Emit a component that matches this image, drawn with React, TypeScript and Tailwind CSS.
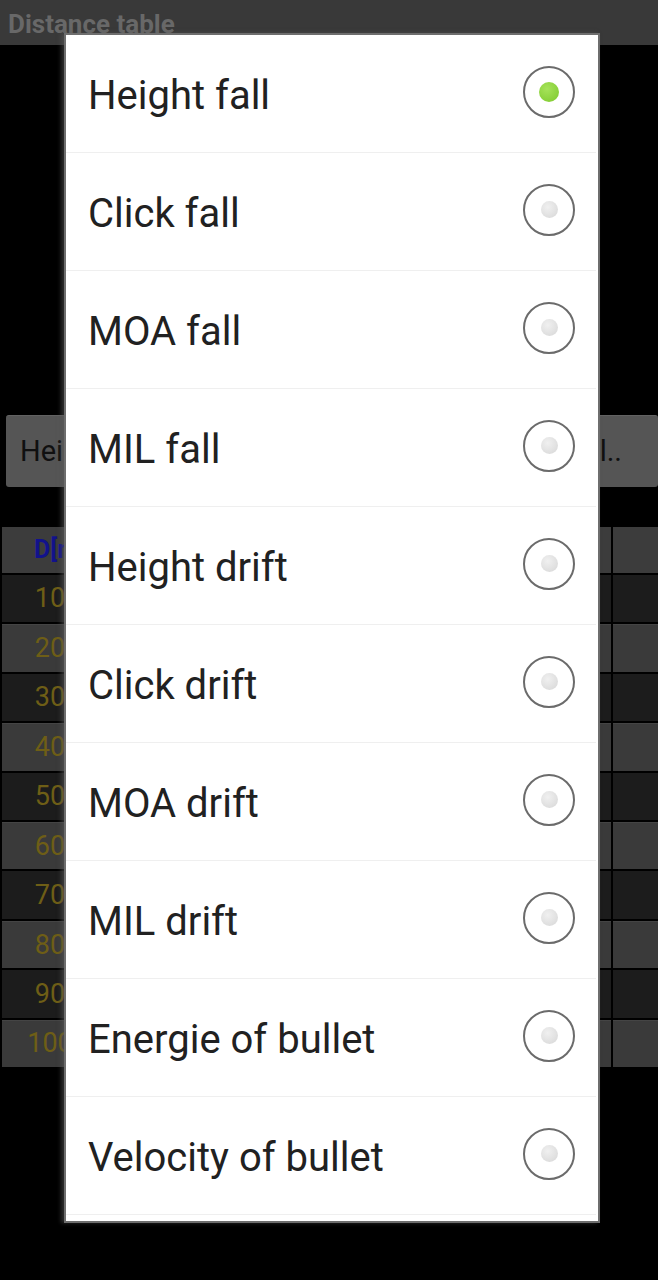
import React from "react";

const options = [
  "Height fall",
  "Click fall",
  "MOA fall",
  "MIL fall",
  "Height drift",
  "Click drift",
  "MOA drift",
  "MIL drift",
  "Energie of bullet",
  "Velocity of bullet",
];

const distances = ["10", "20", "30", "40", "50", "60", "70", "80", "90", "100"];

const Radio = ({ checked }: { checked: boolean }) => (
  <div className="w-[52px] h-[52px] rounded-full border-2 border-[#6b6b6b] flex items-center justify-center">
    {checked ? (
      <div className="w-[20px] h-[20px] rounded-full bg-[radial-gradient(circle_at_40%_35%,#a6e35a,#7cc82c)]" />
    ) : (
      <div className="w-[17px] h-[17px] rounded-full bg-[radial-gradient(circle_at_40%_35%,#f0f0f0,#d6d6d6)]" />
    )}
  </div>
);

export default function App() {
  return (
    <div className="relative w-[658px] h-[1280px] overflow-hidden bg-black font-['Roboto',sans-serif]">
      {/* barre de titre (assombrie) */}
      <div className="h-[45px] bg-[#393939] flex items-center pl-2 pt-[2px]">
        <span className="text-[26px] font-bold text-[#686868] leading-none">Distance table</span>
      </div>

      {/* bouton de sélection */}
      <div className="mt-[370px] ml-[6px] h-[72px] rounded-[3px] bg-[#555555] border-t border-[#626262] flex items-center justify-between pl-[14px] pr-[36px] text-[29px] text-[#101010]">
        <span>Height fall</span>
        <span>Tabl..</span>
      </div>

      {/* tableau */}
      <div className="mt-[40px] flex flex-col gap-[2px] pl-[2px]">
        <div className="flex gap-[2px] h-[46px]">
          <div className="w-[96px] bg-[#3c3c3c] flex items-center pl-[32px] text-[25px] font-bold text-[#12128c]">
            D[m]
          </div>
          <div className="flex-1 bg-[#3c3c3c]" />
          <div className="w-[45px] bg-[#3c3c3c]" />
        </div>
        {distances.map((d, i) => {
          const bg = i % 2 === 0 ? "bg-[#1c1c1c]" : "bg-[#3a3a3a] border-t border-[#444444]";
          return (
            <div key={d} className="flex gap-[2px] h-[47.4px]">
              <div className={`w-[96px] ${bg} flex items-center justify-center text-[27px] text-[#6e5e16]`}>
                {d}
              </div>
              <div className={`flex-1 ${bg}`} />
              <div className={`w-[45px] ${bg}`} />
            </div>
          );
        })}
      </div>

      {/* dialogue de choix */}
      <div className="absolute left-[64px] top-[33px] w-[536px] h-[1190px] bg-white border-2 border-[#6e6e6e] shadow-[-3px_0_4px_rgba(90,90,90,0.5)] flex flex-col">
        {options.map((o, i) => (
          <div
            key={o}
            className="h-[118px] shrink-0 border-b border-[#efefef] mr-[2px] flex items-center justify-between pl-[22px] pr-[21px]"
          >
            <span className="text-[40px] text-[#212121] leading-none mt-[5px]">{o}</span>
            <div className="-mt-[4px]">
              <Radio checked={i === 0} />
            </div>
          </div>
        ))}
      </div>
    </div>
  );
}
